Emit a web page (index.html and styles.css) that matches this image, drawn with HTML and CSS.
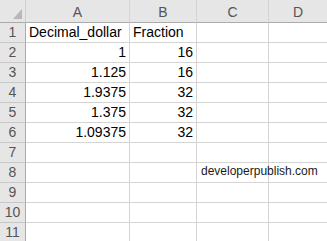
FILE: index.html
```html
<!DOCTYPE html>
<html>
<head>
<meta charset="utf-8">
<link rel="stylesheet" href="styles.css">
</head>
<body>
<div class="sheet">
  <div class="corner hd"><span class="tri"></span></div>
  <div class="col hd">A</div>
  <div class="col hd">B</div>
  <div class="col hd">C</div>
  <div class="col hd">D</div>

  <div class="row hd">1</div>
  <div class="cell">Decimal_dollar</div>
  <div class="cell">Fraction</div>
  <div class="cell"></div>
  <div class="cell"></div>

  <div class="row hd">2</div>
  <div class="cell num">1</div>
  <div class="cell num">16</div>
  <div class="cell"></div>
  <div class="cell"></div>

  <div class="row hd">3</div>
  <div class="cell num">1.125</div>
  <div class="cell num">16</div>
  <div class="cell"></div>
  <div class="cell"></div>

  <div class="row hd">4</div>
  <div class="cell num">1.9375</div>
  <div class="cell num">32</div>
  <div class="cell"></div>
  <div class="cell"></div>

  <div class="row hd">5</div>
  <div class="cell num">1.375</div>
  <div class="cell num">32</div>
  <div class="cell"></div>
  <div class="cell"></div>

  <div class="row hd">6</div>
  <div class="cell num">1.09375</div>
  <div class="cell num">32</div>
  <div class="cell"></div>
  <div class="cell"></div>

  <div class="row hd">7</div>
  <div class="cell"></div>
  <div class="cell"></div>
  <div class="cell"></div>
  <div class="cell"></div>

  <div class="row hd">8</div>
  <div class="cell"></div>
  <div class="cell"></div>
  <div class="cell spill"><span class="link">developerpublish.com</span></div>
  <div class="cell"></div>

  <div class="row hd">9</div>
  <div class="cell"></div>
  <div class="cell"></div>
  <div class="cell"></div>
  <div class="cell"></div>

  <div class="row hd">10</div>
  <div class="cell"></div>
  <div class="cell"></div>
  <div class="cell"></div>
  <div class="cell"></div>

  <div class="row hd">11</div>
  <div class="cell"></div>
  <div class="cell"></div>
  <div class="cell"></div>
  <div class="cell"></div>
</div>
</body>
</html>
```

FILE: styles.css
```css
html, body {
  margin: 0;
  padding: 0;
  background: #ffffff;
  overflow: hidden;
}
.sheet {
  display: grid;
  grid-template-columns: 26px 104px 67px 72px 58px;
  grid-template-rows: 23px repeat(11, 20px);
  width: 327px;
  height: 241px;
  overflow: hidden;
  font-family: "Liberation Sans", Arial, sans-serif;
  font-size: 14px;
  color: #000;
}
.sheet > div {
  box-sizing: border-box;
  border-right: 1px solid #d4d4d4;
  border-bottom: 1px solid #d4d4d4;
  display: flex;
  align-items: flex-end;
  padding: 0 3px 3px 3px;
  white-space: nowrap;
  line-height: 14px;
}
.sheet > div:nth-child(5n) {
  border-right: none;
}
.hd {
  background: #e6e6e6;
  color: #555555;
  font-size: 14px;
}
.col {
  justify-content: center;
  border-bottom: 1px solid #ababab !important;
  border-right: 1px solid #d0d0d0;
}
.corner {
  position: relative;
  border-bottom: 1px solid #ababab !important;
  border-right: 1px solid #d0d0d0 !important;
}
.tri {
  position: absolute;
  left: 13px;
  top: 9px;
  width: 0;
  height: 0;
  border-left: 9px solid transparent;
  border-bottom: 10px solid #b7b7b7;
}
.row {
  justify-content: center;
  border-right: 1px solid #ababab !important;
  border-bottom: 1px solid #c8c8c8 !important;
}
.num {
  justify-content: flex-end;
}
.spill {
  overflow: visible;
  position: relative;
  z-index: 1;
}
.link {
  font-size: 12px;
  color: #1a1a1a;
  padding-left: 1px;
  padding-bottom: 1px;
}
```
